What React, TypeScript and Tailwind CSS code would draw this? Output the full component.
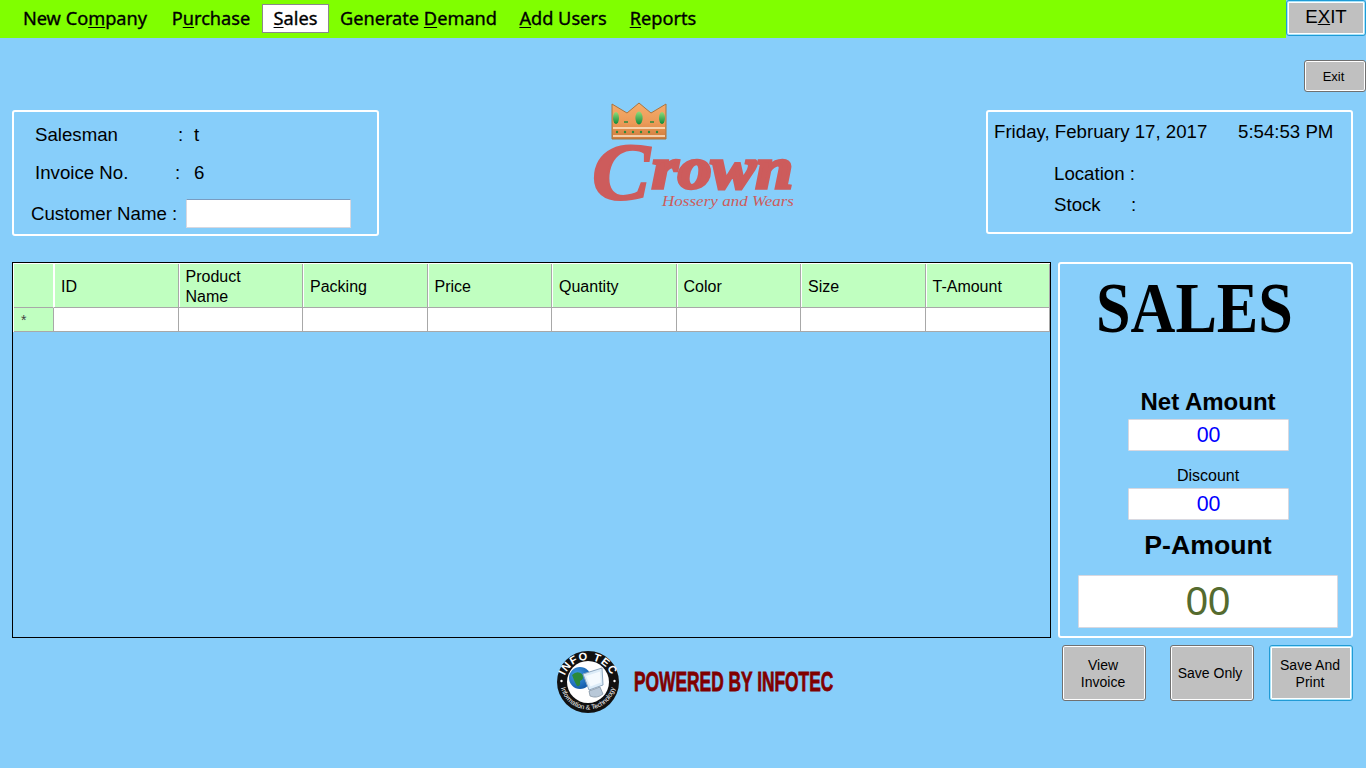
import React from "react";

const SANS = "font-['Liberation_Sans',Arial,sans-serif]";

function MenuItem({ left, mark, right, active, w }: { left: string; mark: string; right: string; active?: boolean; w: string }) {
  return (
    <div
      className={`${w} h-[29px] flex items-center justify-center text-[18.2px] whitespace-nowrap text-black [-webkit-text-stroke:0.35px_black] ${
        active ? "bg-white border border-[#8a8a8a]" : ""
      }`}
    >
      <span>
        {left}
        <u className="underline-offset-2">{mark}</u>
        {right}
      </span>
    </div>
  );
}

function CrownLogo() {
  return (
    <svg width="210" height="112" viewBox="0 0 210 112" className="shrink-0 overflow-visible">
      <defs>
        <linearGradient id="cg" x1="0" y1="0" x2="0" y2="1">
          <stop offset="0" stopColor="#f4ad6c" />
          <stop offset="0.55" stopColor="#ec9a58" />
          <stop offset="1" stopColor="#cf7c3c" />
        </linearGradient>
        <linearGradient id="gem" x1="0" y1="0" x2="0" y2="1">
          <stop offset="0" stopColor="#8fdc7a" />
          <stop offset="1" stopColor="#0c8a3c" />
        </linearGradient>
      </defs>
      <path d="M22 3 L37 12 L49 2 L61 12 L76 3 L76 38 L22 38 Z" fill="url(#cg)" stroke="#a9743f" strokeWidth="1" strokeLinejoin="round" />
      <path d="M23 27 H75 M23 35 H75" stroke="#fde7cc" strokeWidth="1.4" />
      <ellipse cx="26" cy="17" rx="3" ry="6" fill="url(#gem)" />
      <ellipse cx="49" cy="17" rx="3.6" ry="6.4" fill="url(#gem)" />
      <ellipse cx="72" cy="17" rx="3" ry="6" fill="url(#gem)" />
      <path d="M34 21 h4 M60 21 h4" stroke="#2a8a3e" strokeWidth="1.4" />
      {[27, 35, 43, 51, 59, 67].map((x) => (
        <circle key={x} cx={x} cy="31" r="1.2" fill="#2a8a3e" />
      ))}
      <g fontFamily="'Liberation Serif', serif" fontStyle="italic" fontWeight="700" fill="#cd5c5c" stroke="#cd5c5c">
        <text x="2" y="98" fontSize="80" strokeWidth="2" textLength="58" lengthAdjust="spacingAndGlyphs">C</text>
        <text x="62" y="87" fontSize="60" strokeWidth="3.5" textLength="141" lengthAdjust="spacingAndGlyphs">rown</text>
      </g>
      <text x="72" y="105" fontFamily="'Liberation Serif', serif" fontStyle="italic" fontSize="15.5" fill="#cd5c5c" textLength="132" lengthAdjust="spacingAndGlyphs">
        Hossery and Wears
      </text>
    </svg>
  );
}

function InfoTecBadge() {
  return (
    <svg width="64" height="64" viewBox="0 0 64 64" className="shrink-0">
      <defs>
        <path id="topArc" d="M7 35 A25 25 0 0 1 57 35" />
        <path id="botArc" d="M4.5 32 A27.5 27.5 0 0 0 59.5 32" />
        <radialGradient id="gl" cx="0.35" cy="0.35" r="0.8">
          <stop offset="0" stopColor="#3f9ee8" />
          <stop offset="1" stopColor="#0d4f9e" />
        </radialGradient>
      </defs>
      <circle cx="32" cy="32" r="31" fill="#111" />
      <circle cx="32" cy="32" r="21" fill="#fff" />
      <text fontFamily="'Liberation Sans', sans-serif" fontWeight="700" fontSize="11" fill="#fff" letterSpacing="1">
        <textPath href="#topArc" startOffset="50%" textAnchor="middle">INFO TEC</textPath>
      </text>
      <text fontFamily="'Liberation Sans', sans-serif" fontSize="6.6" fill="#fff">
        <textPath href="#botArc" startOffset="50%" textAnchor="middle">Information &amp; Technology</textPath>
      </text>
      <circle cx="5.5" cy="31" r="1.2" fill="#fff" />
      <circle cx="58.5" cy="31" r="1.2" fill="#fff" />
      <circle cx="24" cy="28" r="11" fill="url(#gl)" />
      <path d="M16 25 Q21 20 26 24 Q29 29 24 31 Q25 37 21 36 Q18 31 16 25 Z" fill="#2c8a3a" />
      <path d="M27 24 L46 18 L47 35 L33 40 Z" fill="#dcecf8" stroke="#8fa8c0" strokeWidth="1" />
      <path d="M30 26 L44 21.5 L45 32.5 L34.5 36.5 Z" fill="#f4fafe" />
      <path d="M33 41 L44 37 L47 44 Q41 49 34 46 Z" fill="#b8c8d8" stroke="#7c8c9c" strokeWidth="0.7" />
    </svg>
  );
}

function Button({ children, w, h, cls, ring }: { children: React.ReactNode; w: string; h: string; cls: string; ring?: boolean }) {
  return (
    <button
      className={`${w} ${h} ${cls} ${SANS} shrink-0 flex items-center justify-center text-center rounded-[3px] bg-[#c0c0c0] text-black border leading-[17px] ${
        ring ? "border-[#1f9bd6] shadow-[inset_0_0_0_1px_#a8e4fa,inset_0_0_0_2px_#ffffff]" : "border-[#707070] shadow-[inset_0_0_0_1px_#ffffff]"
      }`}
    >
      {children}
    </button>
  );
}

function Value({ w, h, cls, children }: { w: string; h: string; cls: string; children: React.ReactNode }) {
  return (
    <div className={`${w} ${h} ${cls} bg-white border border-[#d8d8e0] rounded-[1px] flex items-center justify-center`}>
      {children}
    </div>
  );
}

const COLS: React.ReactNode[] = [
  "ID",
  <>
    Product
    <br />
    Name
  </>,
  "Packing",
  "Price",
  "Quantity",
  "Color",
  "Size",
  "T-Amount",
];

export default function App() {
  return (
    <div className={`${SANS} w-[1366px] h-[768px] overflow-hidden bg-[#87cefa] text-black flex flex-col`}>
      {/* menu bar */}
      <div className="h-[38px] flex shrink-0">
        <div className="flex-1 bg-[#80ff00] flex items-start pt-[4px] pl-[10px] font-['Noto_Sans',sans-serif]">
          <MenuItem w="w-[150px]" left="New Co" mark="m" right="pany" />
          <MenuItem w="w-[102px]" left="P" mark="u" right="rchase" />
          <MenuItem w="w-[67px]" left="" mark="S" right="ales" active />
          <MenuItem w="w-[179px]" left="Generate " mark="D" right="emand" />
          <MenuItem w="w-[110px]" left="" mark="A" right="dd Users" />
          <MenuItem w="w-[90px]" left="" mark="R" right="eports" />
        </div>
        <Button w="w-[80px]" h="h-[36px]" cls="text-[18.67px] pb-[3px]" ring>
          <span>
            E<u>X</u>IT
          </span>
        </Button>
      </div>

      {/* small exit */}
      <div className="flex justify-end mt-[22px] shrink-0">
        <Button w="w-[62px]" h="h-[32px]" cls="text-[13px] pr-[3px]">
          Exit
        </Button>
      </div>

      {/* header row */}
      <div className="flex items-start mt-[18px] ml-[12px] h-[126px] shrink-0">
        <div className="w-[367px] h-[126px] border-2 border-white rounded-[3px] text-[18.67px] shrink-0">
          <div className="flex h-[21px] mt-[12px] items-center">
            <span className="ml-[21px] w-[143px]">Salesman</span>
            <span className="w-[16px]">:</span>
            <span>t</span>
          </div>
          <div className="flex h-[21px] mt-[17px] items-center">
            <span className="ml-[21px] w-[140px]">Invoice No.</span>
            <span className="w-[19px]">:</span>
            <span>6</span>
          </div>
          <div className="flex items-center mt-[16px] h-[29px]">
            <span className="ml-[17px] w-[155px] whitespace-nowrap pt-[1px]">Customer Name :</span>
            <div className="w-[165px] h-[29px] bg-white border border-[#d8d8e0] border-t-[#7a9cc0] rounded-[1px]" />
          </div>
        </div>
        <div className="ml-[211px] -mt-[9px] shrink-0">
          <CrownLogo />
        </div>
        <div className="ml-[186px] w-[367px] h-[124px] border-2 border-white rounded-[3px] text-[18.67px] shrink-0">
          <div className="flex h-[21px] mt-[9px] items-center whitespace-nowrap">
            <span className="ml-[6px] w-[244px]">Friday, February 17, 2017</span>
            <span>5:54:53 PM</span>
          </div>
          <div className="flex h-[21px] mt-[21px] items-center whitespace-nowrap">
            <span className="ml-[66px]">Location :</span>
          </div>
          <div className="flex h-[21px] mt-[10px] items-center whitespace-nowrap">
            <span className="ml-[66px] w-[77px]">Stock</span>
            <span>:</span>
          </div>
        </div>
      </div>

      {/* grid + totals */}
      <div className="flex ml-[12px] mt-[26px] h-[376px] shrink-0">
        <div className="w-[1039px] h-[376px] border border-black shrink-0 text-[16px] leading-[20px]">
          <div className="grid grid-cols-[40px_repeat(8,1fr)] border-t border-l border-white bg-[#c0ffc0] h-[45px]">
            <div className="border-r border-b border-r-white border-b-[#a8a8a8]" />
            {COLS.map((c, i) => (
              <div key={i} className="flex items-center pl-[7px] pt-[3px] border-r border-b border-r-[#a8a8a8] border-b-[#a8a8a8] shadow-[inset_1px_0_0_#ffffff]">
                <span>{c}</span>
              </div>
            ))}
          </div>
          <div className="grid grid-cols-[40px_repeat(8,1fr)] border-l border-white h-[24px]">
            <div className="bg-[#c0ffc0] border-r border-b border-[#a8a8a8] flex items-center pl-[7px] text-[14px] text-[#444]">*</div>
            {COLS.map((_, i) => (
              <div key={i} className="bg-white border-r border-b border-[#a8a8a8]" />
            ))}
          </div>
        </div>

        <div className="ml-[7px] w-[295px] h-[376px] border-2 border-white rounded-[3px] flex flex-col items-center pl-[5px] shrink-0">
          <div className="self-start ml-[31px] h-[88px] flex items-center origin-left scale-x-[0.875] font-['Liberation_Serif',serif] font-bold text-[71px] leading-none">
            SALES
          </div>
          <div className="mt-[36px] h-[28px] flex items-center font-bold text-[24px] whitespace-nowrap">Net Amount</div>
          <Value w="w-[161px]" h="h-[32px]" cls="ml-[1px] mt-[3px] pt-[2px] text-[21.33px] text-[#0000ff]">00</Value>
          <div className="mt-[16px] h-[18px] flex items-center text-[16px]">Discount</div>
          <Value w="w-[161px]" h="h-[32px]" cls="ml-[1px] mt-[3px] pt-[2px] text-[21.33px] text-[#0000ff]">00</Value>
          <div className="mt-[9px] h-[32px] flex items-center font-bold text-[26.67px] whitespace-nowrap">P-Amount</div>
          <Value w="w-[260px]" h="h-[53px]" cls="mt-[14px] pb-[2px] text-[40px] text-[#556b2f]">00</Value>
        </div>
      </div>

      {/* footer */}
      <div className="flex items-start ml-[556px] mt-[7px] shrink-0">
        <div className="mt-[5px] shrink-0">
          <InfoTecBadge />
        </div>
        <div className="ml-[14px] mt-[22px] w-[200px] h-[30px] flex items-center whitespace-nowrap origin-left scale-x-[0.62] font-bold text-[28px] text-[#800000] [-webkit-text-stroke:0.8px_#800000] shrink-0">
          POWERED BY INFOTEC
        </div>
        <div className="ml-[228px] flex shrink-0">
          <Button w="w-[84px]" h="h-[56px]" cls="text-[14px] pt-[2px] pr-[2px]">
            <span>
              View
              <br />
              Invoice
            </span>
          </Button>
          <Button w="w-[84px]" h="h-[56px]" cls="ml-[24px] text-[14px] pr-[4px]">Save Only</Button>
          <Button w="w-[84px]" h="h-[56px]" cls="ml-[15px] text-[14px] pt-[2px] pr-[2px]" ring>
            <span>
              Save And
              <br />
              Print
            </span>
          </Button>
        </div>
      </div>
    </div>
  );
}
